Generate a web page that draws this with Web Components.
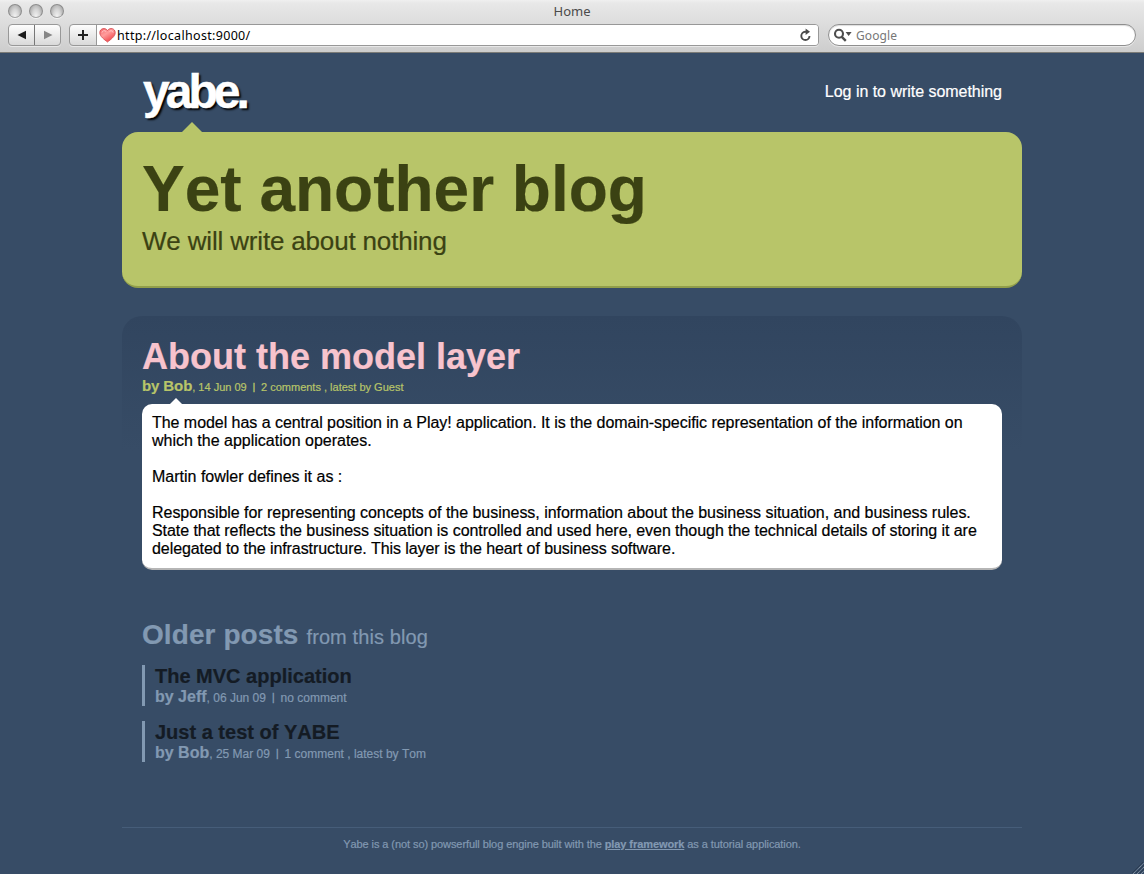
<!DOCTYPE html>
<html lang="en">
<head>
<meta charset="utf-8">
<title>Home</title>
<style>
html, body { margin: 0; height: 100%; overflow: hidden; }
body { font-family: "Liberation Sans", Arial, sans-serif; background: #374c66; display: flex; flex-direction: column; font-kerning: none; -webkit-text-stroke: .2px; }
.page { width: 900px; margin: 0 auto; flex: 1; display: flex; flex-direction: column; }
.l1 { letter-spacing: -.042px; }
.l2 { letter-spacing: -.034px; }
.l3 { letter-spacing: -.056px; }
.l4 { letter-spacing: -.075px; }
</style>
</head>
<body>
<browser-bar address="http://localhost:9000/" engine="Google">Home</browser-bar>
<div class="page">
  <site-header>yabe.<span slot="action">Log in to write something</span></site-header>
  <blog-banner>Yet another blog<span slot="tagline">We will write about nothing</span></blog-banner>
  <blog-post author="Bob" date="14 Jun 09" comments="2 comments , latest by Guest">
    <span slot="title">About the model layer</span><span class="l1">The model has a central position in a Play! application. It is the domain-specific representation of the information on</span><br>which the application operates.<br><br>Martin fowler defines it as :<br><br><span class="l2">Responsible for representing concepts of the business, information about the business situation, and business rules.</span><br><span class="l3">State that reflects the business situation is controlled and used here, even though the technical details of storing it are</span><br><span class="l4">delegated to the infrastructure. This layer is the heart of business software.</span></blog-post>
  <older-posts>
    <span slot="title">Older posts</span><span slot="from">from this blog</span>
    <post-teaser author="Jeff" date="06 Jun 09" comments="no comment">The MVC application</post-teaser>
    <post-teaser author="Bob" date="25 Mar 09" comments="1 comment , latest by Tom">Just a test of YABE</post-teaser>
  </older-posts>
  <site-footer></site-footer>
</div>
<resize-grip></resize-grip>
<script>
class Base extends HTMLElement {
  connectedCallback() {
    if (this.shadowRoot) return;
    const t = document.createElement('template');
    t.innerHTML = this.view();
    this.attachShadow({ mode: 'open' }).append(t.content.cloneNode(true));
  }
  get(name) { return this.getAttribute(name) || ''; }
}

customElements.define('browser-bar', class extends Base {
  view() { return `<style>
:host { display: flex; flex-direction: column; height: 53px; box-sizing: border-box; flex: none; border-bottom: 1px solid #7b7b77;
  background: linear-gradient(#f0f0f0 0, #e8e8e8 3px, #cdcdcd 100%); font-family: "Noto Sans", "Open Sans", sans-serif; color: #000; -webkit-text-stroke: 0; }
.title { display: grid; grid-template-columns: 120px 1fr 120px; height: 24px; align-items: center; box-sizing: border-box; }
.lights { display: flex; gap: 7px; padding-left: 8px; margin-top: -3px; }
.lights i { width: 14px; height: 14px; border-radius: 50%; box-sizing: border-box; border: 1px solid #8d8d8d; border-bottom-color: #a2a2a2;
  background: radial-gradient(ellipse at 50% 100%, #f4f4f4 0, #d5d5d5 45%, #b3b3b3 75%, #a0a0a0 100%); box-shadow: 0 1px 0 #f2f2f2; }
.name { text-align: center; font-size: 13px; line-height: 22px; height: 24px; color: #4b4b4b; }
.tools { display: flex; padding: 0 8px; height: 22px; }
.box { display: flex; box-sizing: border-box; height: 22px; border: 1px solid #989898; border-radius: 4px; background: linear-gradient(#fdfdfd, #d9d9d9); box-shadow: 0 1px 0 #e8e8e8; }
.nav { width: 53px; margin-right: 8px; }
.cell { flex: 1; display: grid; place-items: center; }
.cell + .cell { border-left: 1px solid #777; }
.place { width: 750px; margin-right: 9px; overflow: hidden; }
.add { flex: 0 0 26px; border-right: 1px solid #989898; }
.url { flex: 1; display: flex; align-items: center; background: #fff; font-size: 12.5px; padding: 0 6px 0 2px; gap: 1px; border-top: 1px solid #ddd; margin-top: -1px; }
.text { flex: 1; line-height: 20px; letter-spacing: .32px; padding-top: 2px; }
.find { flex: 1; border-radius: 11px; background: #fff; align-items: center; padding-left: 4px; font-size: 12px; color: #777; line-height: 20px; gap: 3px; border-color: #8e8e8e; box-shadow: inset 0 1px 1px #ddd, 0 1px 0 #e8e8e8; letter-spacing: .1px; }
.find span { padding-top: 2px; }
svg { display: block; flex: none; }
</style>
<div class="title"><div class="lights"><i></i><i></i><i></i></div><div class="name"><slot></slot></div></div>
<div class="tools">
  <div class="box nav">
    <span class="cell"><svg width="10" height="10"><path d="M0.5 5L9 .8v8.4z" fill="#1b1b1b"/></svg></span>
    <span class="cell"><svg width="10" height="10"><path d="M9.5 5L1 .8v8.4z" fill="#868686"/></svg></span>
  </div>
  <div class="box place">
    <span class="cell add"><svg width="12" height="12"><path d="M6 1v10M1 6h10" stroke="#222" stroke-width="2"/></svg></span>
    <div class="url">
      <svg width="17" height="16" viewBox="0 0 17 16"><defs><linearGradient id="h" x2=".7" y2="1"><stop stop-color="#f46468"/><stop offset=".45" stop-color="#ff9c9c"/><stop offset="1" stop-color="#f04146"/></linearGradient></defs>
        <path d="M8.5 15C5.5 12.6.8 9.6.8 5.6.8 1.3 6.3.2 8.5 3.5c2.2-3.3 7.7-2.2 7.7 2.1 0 4-4.7 7-7.7 9.4z" fill="url(#h)" stroke="#d65055" stroke-width=".9"/><path d="M3 5.6c.3-2 2.8-2.6 4.2-1M10.5 4.3c1.5-1 3.4-.4 3.6 1.3" fill="none" stroke="#ffc8c8" stroke-width="1"/></svg>
      <span class="text">${this.get('address')}</span>
      <svg width="13" height="14" viewBox="0 0 13 14"><path d="M7.8 3.8H6.2a4.1 4.1 0 1 0 4.3 4.2" fill="none" stroke="#4b4b4b" stroke-width="1.9"/><path d="M6.6 .6v6.4L11 3.8z" fill="#4b4b4b"/></svg>
    </div>
  </div>
  <div class="box find">
    <svg width="20" height="14" viewBox="0 0 20 14"><circle cx="6" cy="5.8" r="4" fill="none" stroke="#4d4d4d" stroke-width="2.1"/><path d="M8.8 8.8l4 4" stroke="#4d4d4d" stroke-width="2.4"/><path d="M12.6 4h6l-3 4z" fill="#4d4d4d"/></svg>
    <span>${this.get('engine')}</span>
  </div>
</div>`; }
});

customElements.define('site-header', class extends Base {
  view() { return `<style>
:host { display: flex; justify-content: space-between; flex: none; height: 79px; padding: 0 20px; color: #fff; }
.logo { font: bold 48px/56px "Liberation Sans", Arial, sans-serif; letter-spacing: -4px; text-shadow: 2px 2px 2px #000; margin: 11px 0 0 1px; font-kerning: none; -webkit-text-stroke: .5px; }
.action { font-size: 16px; line-height: 18px; margin-top: 30px; letter-spacing: -.03px; }
</style><div class="logo"><slot></slot></div><div class="action"><slot name="action"></slot></div>`; }
});

customElements.define('blog-banner', class extends Base {
  view() { return `<style>
:host { display: block; position: relative; flex: none; box-sizing: border-box; height: 156px; padding: 20px; border-radius: 16px; background: #b8c569; border-bottom: 2px solid #919e4a; color: #3b4213; }
:host::before { content: ""; position: absolute; left: 60px; top: -10px; border: 10px solid transparent; border-top: 0; border-bottom-color: #b8c569; }
h1 { margin: 0; font-size: 64px; line-height: 74px; }
h2 { margin: 0; font-size: 26px; line-height: 30px; font-weight: normal; letter-spacing: -.17px; }
</style><h1><slot></slot></h1><h2><slot name="tagline"></slot></h2>`; }
});

const byline = (el) => `<div class="meta"><b>by ${el.get('author')}</b>, ${el.get('date')}<span class="bar">|</span>${el.get('comments')}</div>`;

customElements.define('blog-post', class extends Base {
  view() { return `<style>
:host { display: block; flex: none; margin-top: 28px; padding: 20px 20px 0; border-radius: 20px 20px 0 0; background: linear-gradient(#31455f, #374c66 135px); }
h2 { margin: 0; font-size: 36px; line-height: 42px; color: #f7c3cd; }
.meta { color: #b8c569; font-size: 11px; line-height: 18px; height: 18px; margin-top: -1px; white-space: pre; }
.meta b { font-size: 15px; letter-spacing: -.1px; }
.bar { font-size: 9px; vertical-align: 1px; margin: 0 6px; -webkit-text-stroke: .4px; }
.body { position: relative; box-sizing: border-box; height: 166px; margin-top: 9px; padding: 10px; background: #fff; border-radius: 10px; border-bottom: 2px solid #b5b5b5; color: #000; font-size: 16px; line-height: 18px; white-space: nowrap; }
.body::before { content: ""; position: absolute; left: 28px; top: -6px; border: 6px solid transparent; border-top: 0; border-bottom-color: #fff; }
</style><h2><slot name="title"></slot></h2>${byline(this)}<div class="body"><slot></slot></div>`; }
});

customElements.define('older-posts', class extends Base {
  view() { return `<style>
:host { display: flex; flex-direction: column; flex: none; margin-top: 48px; padding: 0 20px; gap: 15px; color: #8299b2; }
h3 { margin: 0 0 -4px; font-size: 28px; line-height: 33px; white-space: pre; letter-spacing: .08px; }
small { font-size: 20px; font-weight: normal; margin-left: 8px; letter-spacing: .1px; }
</style><h3><slot name="title"></slot><small><slot name="from"></slot></small></h3><slot></slot>`; }
});

customElements.define('post-teaser', class extends Base {
  view() { return `<style>
:host { display: block; height: 41px; border-left: 3px solid #8299b2; padding-left: 10px; }
h4 { margin: 0; font-size: 20px; line-height: 22px; color: #141b24; }
.meta { font-size: 12px; line-height: 18px; height: 18px; margin-top: 1px; white-space: pre; }
.meta b { font-size: 16px; }
.bar { font-size: 10px; vertical-align: 1px; margin: 0 6px; -webkit-text-stroke: .4px; }
</style><h4><slot></slot></h4>${byline(this)}`; }
});

customElements.define('site-footer', class extends Base {
  view() { return `<style>
:host { display: block; flex: none; margin-top: 65px; border-top: 1px solid #465d79; padding-top: 10px; text-align: center; font-size: 11px; line-height: 13px; color: #8299b2; letter-spacing: -.08px; }
a { font-weight: bold; text-decoration: underline; }
</style>Yabe is a (not so) powserfull blog engine built with the <a>play framework</a> as a tutorial application.`; }
});

customElements.define('resize-grip', class extends Base {
  view() { return `<style>
:host { position: absolute; right: 0; bottom: 0; }
svg { display: block; }
</style><svg width="12" height="12"><g fill="none" stroke="#2c3d54"><path d="M0 11L11 0M4 11L12 3M8 11l4-4"/></g><g fill="none" stroke="#a9b2bd" stroke-width=".8" stroke-dasharray="1.1 .6"><path d="M1 12L12 1M5 12L12 5M9 12l3-3"/></g></svg>`; }
});
</script>
</body>
</html>
